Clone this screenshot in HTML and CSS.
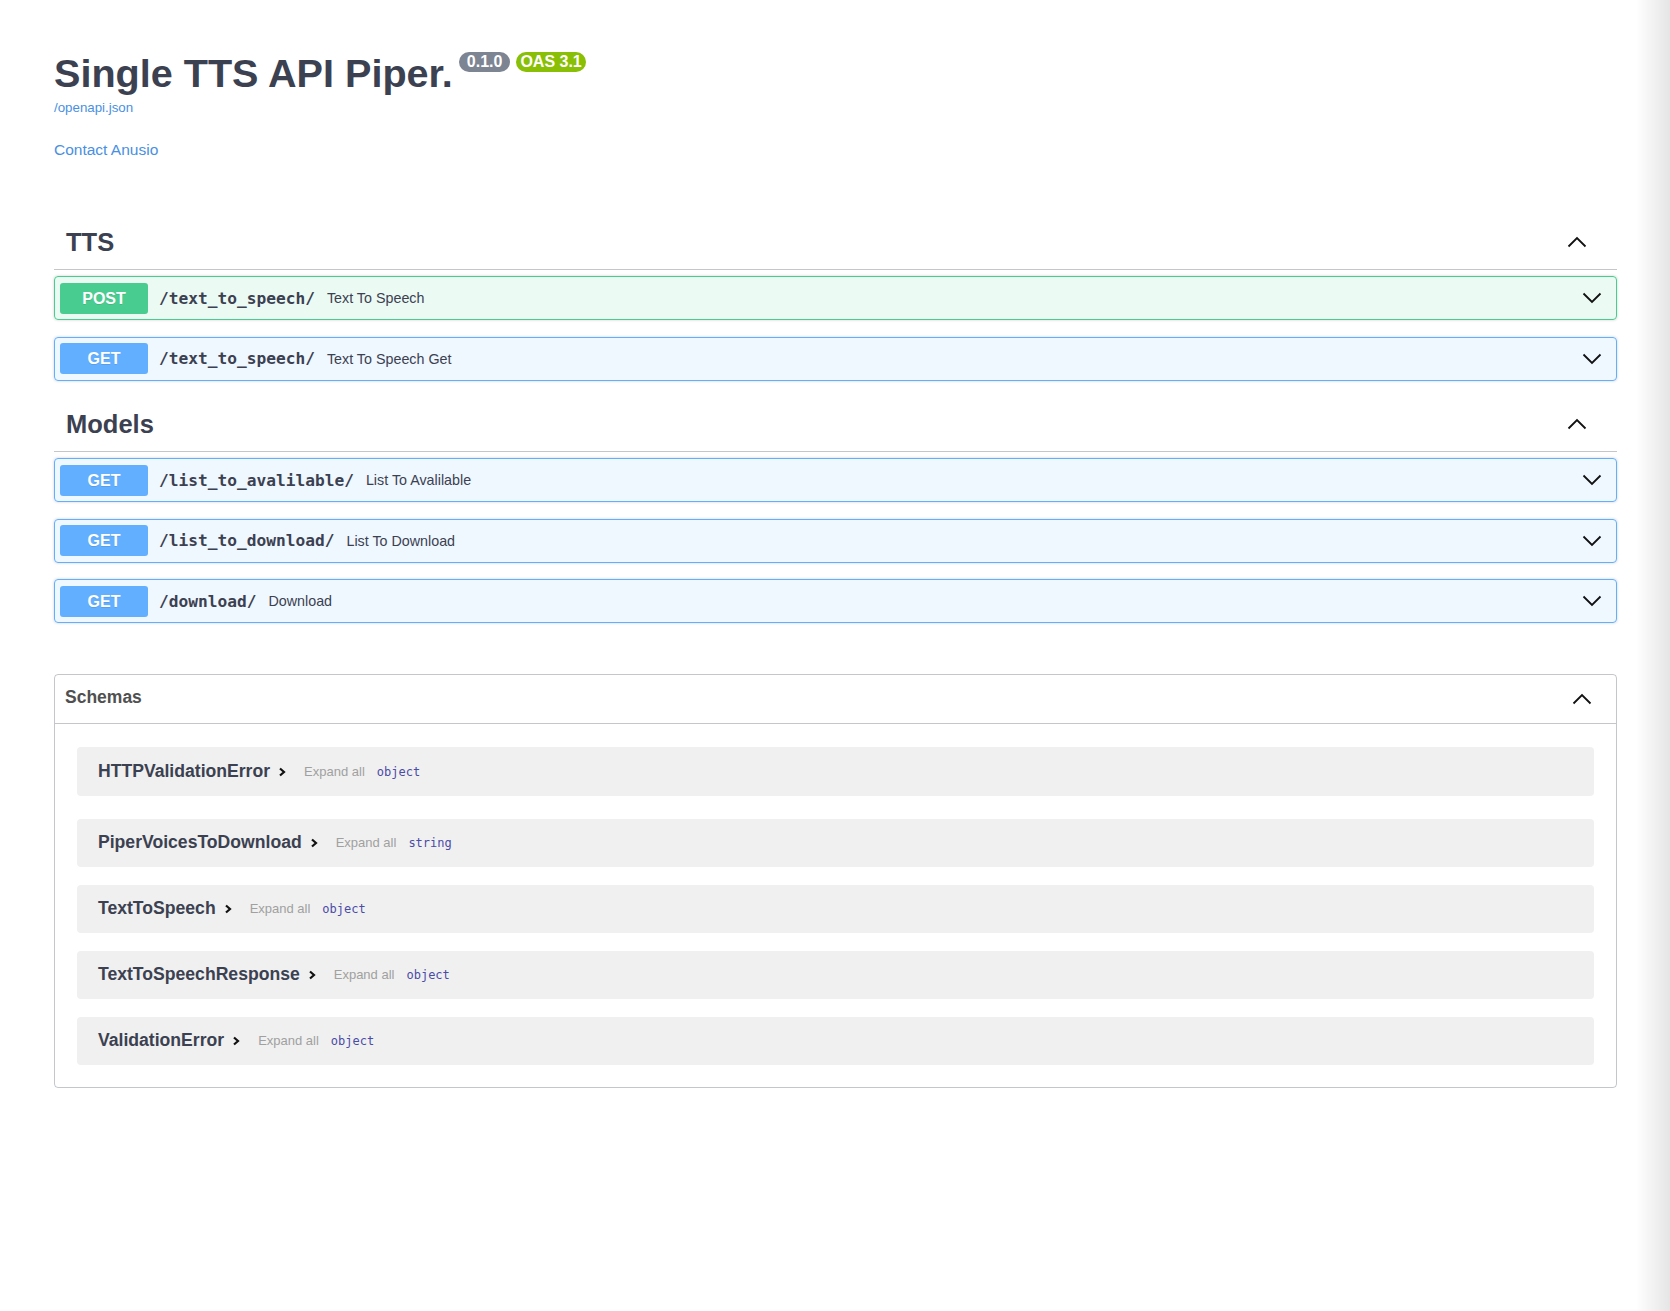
FILE: index.html
```html
<!DOCTYPE html>
<html lang="en">
<head>
<meta charset="utf-8">
<title>Single TTS API Piper. - Swagger UI</title>
<link rel="stylesheet" href="styles.css">
</head>
<body>
<div class="wrapper">
  <section class="info">
    <div class="title-row">
      <h2 class="title">Single TTS API Piper.</h2>
      <span class="badge badge-version">0.1.0</span>
      <span class="badge badge-oas">OAS 3.1</span>
    </div>
    <a class="base-url" href="#">/openapi.json</a>
    <div class="contact"><a class="link" href="#">Contact Anusio</a></div>
  </section>

  <section class="tag-section">
    <div class="tag-row">
      <h3 class="tag-title">TTS</h3>
      <svg class="arrow-up" width="20" height="12" viewBox="0 0 20 12"><polyline points="1.5,10.5 10,2 18.5,10.5"/></svg>
    </div>
    <div class="opblock opblock-post">
      <span class="method method-post">POST</span>
      <span class="path">/text_to_speech/</span>
      <span class="summary">Text To Speech</span>
      <svg class="arrow-down" width="20" height="12" viewBox="0 0 20 12"><polyline points="1.5,1.5 10,10 18.5,1.5"/></svg>
    </div>
    <div class="opblock opblock-get">
      <span class="method method-get">GET</span>
      <span class="path">/text_to_speech/</span>
      <span class="summary">Text To Speech Get</span>
      <svg class="arrow-down" width="20" height="12" viewBox="0 0 20 12"><polyline points="1.5,1.5 10,10 18.5,1.5"/></svg>
    </div>
  </section>

  <section class="tag-section">
    <div class="tag-row">
      <h3 class="tag-title">Models</h3>
      <svg class="arrow-up" width="20" height="12" viewBox="0 0 20 12"><polyline points="1.5,10.5 10,2 18.5,10.5"/></svg>
    </div>
    <div class="opblock opblock-get">
      <span class="method method-get">GET</span>
      <span class="path">/list_to_avalilable/</span>
      <span class="summary">List To Avalilable</span>
      <svg class="arrow-down" width="20" height="12" viewBox="0 0 20 12"><polyline points="1.5,1.5 10,10 18.5,1.5"/></svg>
    </div>
    <div class="opblock opblock-get">
      <span class="method method-get">GET</span>
      <span class="path">/list_to_download/</span>
      <span class="summary">List To Download</span>
      <svg class="arrow-down" width="20" height="12" viewBox="0 0 20 12"><polyline points="1.5,1.5 10,10 18.5,1.5"/></svg>
    </div>
    <div class="opblock opblock-get">
      <span class="method method-get">GET</span>
      <span class="path">/download/</span>
      <span class="summary">Download</span>
      <svg class="arrow-down" width="20" height="12" viewBox="0 0 20 12"><polyline points="1.5,1.5 10,10 18.5,1.5"/></svg>
    </div>
  </section>

  <section class="models">
    <div class="models-header">
      <h4 class="models-title">Schemas</h4>
      <svg class="arrow-up" width="20" height="12" viewBox="0 0 20 12"><polyline points="1.5,10.5 10,2 18.5,10.5"/></svg>
    </div>
    <div class="models-list">
      <div class="model-container model-first">
        <span class="model-title">HTTPValidationError</span>
        <svg class="model-toggle" width="8" height="10" viewBox="0 0 8 10"><polyline points="2,1.5 6,5 2,8.5"/></svg>
        <span class="expand-all">Expand all</span>
        <span class="prop-type">object</span>
      </div>
      <div class="model-container">
        <span class="model-title">PiperVoicesToDownload</span>
        <svg class="model-toggle" width="8" height="10" viewBox="0 0 8 10"><polyline points="2,1.5 6,5 2,8.5"/></svg>
        <span class="expand-all">Expand all</span>
        <span class="prop-type">string</span>
      </div>
      <div class="model-container">
        <span class="model-title">TextToSpeech</span>
        <svg class="model-toggle" width="8" height="10" viewBox="0 0 8 10"><polyline points="2,1.5 6,5 2,8.5"/></svg>
        <span class="expand-all">Expand all</span>
        <span class="prop-type">object</span>
      </div>
      <div class="model-container">
        <span class="model-title">TextToSpeechResponse</span>
        <svg class="model-toggle" width="8" height="10" viewBox="0 0 8 10"><polyline points="2,1.5 6,5 2,8.5"/></svg>
        <span class="expand-all">Expand all</span>
        <span class="prop-type">object</span>
      </div>
      <div class="model-container">
        <span class="model-title">ValidationError</span>
        <svg class="model-toggle" width="8" height="10" viewBox="0 0 8 10"><polyline points="2,1.5 6,5 2,8.5"/></svg>
        <span class="expand-all">Expand all</span>
        <span class="prop-type">object</span>
      </div>
    </div>
  </section>
</div>
<div class="edge-shadow"></div>
</body>
</html>
```

FILE: styles.css
```css
html, body {
  margin: 0;
  padding: 0;
  background: #fff;
}

body {
  font-family: "Liberation Sans", Arial, sans-serif;
  color: #3b4151;
}

.wrapper {
  width: 1563px;
  margin: 0 0 0 54px;
  padding-bottom: 100px;
}

/* ---------- info ---------- */
.info {
  padding-top: 50px;
}

.title-row {
  display: flex;
  align-items: flex-start;
}

.title {
  margin: 0;
  font-size: 39.6px;
  line-height: 46px;
  font-weight: 700;
  color: #3b4151;
}

.badge {
  margin-top: 2px;
  height: 20px;
  line-height: 20px;
  font-size: 16px;
  font-weight: 700;
  color: #fff;
  border-radius: 11px;
}

.badge-version {
  margin-left: 6px;
  padding: 0 8px;
  background: #7d8492;
}

.badge-oas {
  margin-left: 6px;
  padding: 0 4px;
  background: #89bf04;
}

.base-url {
  display: block;
  margin-top: 4px;
  font-size: 13.3px;
  line-height: 15px;
  color: #4990e2;
  text-decoration: none;
}

.contact {
  margin-top: 26px;
  font-size: 15.5px;
  line-height: 17px;
}

.link {
  color: #4990e2;
  text-decoration: none;
}

/* ---------- tags ---------- */
.info + .tag-section {
  margin-top: 57px;
}

.tag-row {
  display: flex;
  align-items: center;
  justify-content: space-between;
  height: 54px;
  padding: 0 30px 0 12px;
  border-bottom: 1px solid rgba(59, 65, 81, 0.3);
  margin-bottom: 6px;
}

.tag-title {
  margin: 0;
  font-size: 25.5px;
  line-height: 30px;
  font-weight: 700;
  color: #3b4151;
}

.arrow-up polyline,
.arrow-down polyline {
  fill: none;
  stroke: #111;
  stroke-width: 1.8;
}

/* ---------- operations ---------- */
.opblock {
  display: flex;
  align-items: center;
  height: 42px;
  padding: 0 14px 0 5px;
  margin-bottom: 16.5px;
  border: 1px solid;
  border-radius: 4px;
  box-shadow: 0 0 3px rgba(0, 0, 0, 0.19);
}

.opblock-post {
  border-color: #49cc90;
  background: rgba(73, 204, 144, 0.1);
}

.opblock-get {
  border-color: #61affe;
  background: rgba(97, 175, 254, 0.1);
}

.method {
  width: 88px;
  height: 31px;
  line-height: 31px;
  text-align: center;
  font-size: 16px;
  font-weight: 700;
  color: #fff;
  border-radius: 3px;
  text-shadow: 0 1px 0 rgba(0, 0, 0, 0.1);
  flex: none;
}

.method-post { background: #49cc90; }
.method-get { background: #61affe; }

.path {
  margin-left: 11px;
  font-family: "DejaVu Sans Mono", "Liberation Mono", monospace;
  font-weight: 700;
  font-size: 16.2px;
  color: #3b4151;
}

.summary {
  margin-left: 12px;
  font-size: 14.3px;
  color: #3b4151;
}

.arrow-down {
  margin-left: auto;
}

/* ---------- models ---------- */
.models {
  margin-top: 51px;
  border: 1px solid rgba(59, 65, 81, 0.3);
  border-radius: 4px;
}

.models-header {
  display: flex;
  align-items: center;
  justify-content: space-between;
  height: 48px;
  padding: 0 24px 0 10px;
  border-bottom: 1px solid rgba(59, 65, 81, 0.3);
}

.models-title {
  margin: 0 0 5px 0;
  font-size: 17.5px;
  line-height: 20px;
  font-weight: 700;
  color: #505050;
}

.models-list {
  padding: 23px 22px 22px;
  display: flex;
  flex-direction: column;
  gap: 18px;
}

.model-container {
  display: flex;
  align-items: center;
  height: 48px;
  padding-left: 21px;
  border-radius: 4px;
  background: #f0f0f0;
}

.model-first {
  height: 49px;
  margin-bottom: 4.5px;
}

.model-title {
  font-size: 17.6px;
  font-weight: 700;
  color: #3b4151;
}

.model-toggle {
  margin-left: 8px;
}

.model-toggle polyline {
  fill: none;
  stroke: #111;
  stroke-width: 2.2;
}

.expand-all {
  margin-left: 18px;
  font-size: 13px;
  color: #a0a0a0;
}

.prop-type {
  margin-left: 12px;
  font-family: "DejaVu Sans Mono", "Liberation Mono", monospace;
  font-size: 12px;
  font-weight: 400;
  color: #4b4ba8;
}

/* ---------- right edge shade ---------- */
.edge-shadow {
  position: fixed;
  top: 0;
  right: 0;
  bottom: 0;
  width: 34px;
  background: linear-gradient(to right, rgba(0, 0, 0, 0), rgba(0, 0, 0, 0.1));
  pointer-events: none;
}
```
